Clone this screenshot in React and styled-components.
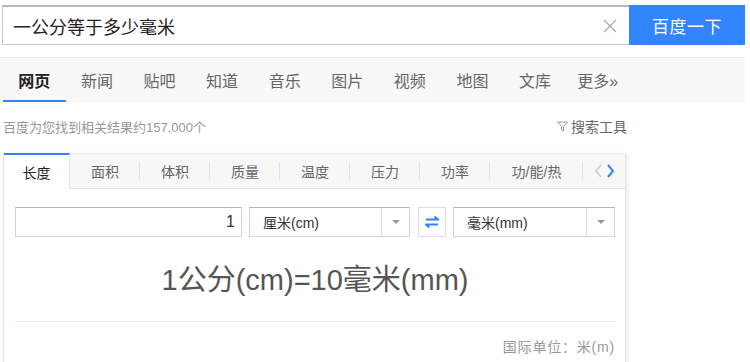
import React from 'react';
import styled, { createGlobalStyle } from 'styled-components';

const GlobalStyle = createGlobalStyle`
  body {
    margin: 0;
    background: #fff;
    font-family: "Liberation Sans", Arial, "Noto Sans CJK SC", sans-serif;
    color: #333;
  }
`;

const Page = styled.div`
  width: 750px;
  height: 362px;
  overflow: hidden;
`;

const SearchBar = styled.div`
  display: flex;
  height: 40px;
  padding: 5px 5px 0 2px;
`;

const SearchBox = styled.div`
  flex: 1;
  display: flex;
  align-items: center;
  box-sizing: border-box;
  border: 1px solid #c4c7ce;
  border-top: 2px solid #b8b8b8;
  border-right: none;
  padding: 0 12px 0 10px;
  font-size: 18px;
  color: #222;
`;

const Query = styled.span`
  flex: 1;
`;

const SearchButton = styled.div`
  width: 116px;
  background: #3385ff;
  color: #fff;
  font-size: 17px;
  display: flex;
  align-items: center;
  justify-content: center;
  letter-spacing: 0.5px;
`;

const Nav = styled.div`
  display: flex;
  margin: 12px 5px 0 0;
  height: 44px;
  padding-left: 3px;
  background: #f8f8f8;
  border-top: 1px solid #ececec;
`;

const NavItem = styled.div`
  width: 62.6px;
  display: flex;
  align-items: center;
  justify-content: center;
  font-size: 16px;
  color: ${(p) => (p.active ? '#222' : '#666')};
  font-weight: ${(p) => (p.active ? 700 : 400)};
  box-sizing: border-box;
  border-bottom: 2px solid ${(p) => (p.active ? '#3385ff' : 'transparent')};
  padding-top: 2px;
`;

const Main = styled.div`
  width: 624px;
  margin-left: 3px;
`;

const CountRow = styled.div`
  height: 51px;
  box-sizing: border-box;
  padding-bottom: 3px;
  display: flex;
  align-items: center;
  justify-content: space-between;
`;

const Count = styled.span`
  font-size: 13px;
  color: #999;
`;

const Tools = styled.span`
  display: flex;
  align-items: center;
  gap: 3px;
  font-size: 14px;
  color: #666;
`;

const Card = styled.div`
  width: 623px;
  box-sizing: border-box;
  border: 1px solid #e6e6e6;
  border-top: none;
  box-shadow: 2px 1px 4px rgba(0, 0, 0, 0.08);
  height: 220px;
`;

const Tabs = styled.div`
  display: flex;
  height: 34px;
  background: #f7f7f7;
  border-bottom: 1px solid #e3e3e3;
  border-top: 1px solid #ececec;
`;

const Tab = styled.div`
  position: relative;
  width: ${(p) => p.w || 70}px;
  display: flex;
  align-items: center;
  justify-content: center;
  font-size: 14px;
  color: ${(p) => (p.active ? '#222' : '#666')};
  box-sizing: border-box;
  ${(p) =>
    p.active
      ? `
    background: #fff;
    border-top: 2px solid #3385ff;
    margin-top: -1px;
    height: 36px;
    border-right: 1px solid #e3e3e3;
  `
      : `
    &::after {
      content: '';
      position: absolute;
      right: 0;
      top: 8px;
      height: 18px;
      width: 1px;
      background: #e3e3e3;
    }
  `}
`;

const TabArrows = styled.div`
  flex: 1;
  display: flex;
  align-items: center;
  justify-content: center;
  gap: 3px;
`;

const Body = styled.div`
  padding: 18px 10px 0 11px;
`;

const InputRow = styled.div`
  display: flex;
  height: 30px;
`;

const NumberInput = styled.div`
  width: 227px;
  box-sizing: border-box;
  border: 1px solid #d3d3d3;
  border-top-color: #b5b5b5;
  display: flex;
  align-items: center;
  justify-content: flex-end;
  padding-right: 6px;
  font-size: 16px;
  color: #333;
`;

const Select = styled.div`
  width: ${(p) => p.w}px;
  margin-left: ${(p) => p.gap}px;
  box-sizing: border-box;
  border: 1px solid #d3d3d3;
  border-top-color: #b5b5b5;
  display: flex;
`;

const SelectText = styled.div`
  flex: 1;
  display: flex;
  align-items: center;
  padding-left: 13px;
  font-size: 14px;
  color: #333;
`;

const SelectArrow = styled.div`
  width: 27px;
  border-left: 1px solid #e0e0e0;
  display: flex;
  align-items: center;
  justify-content: center;
  &::before {
    content: '';
    border-left: 4px solid transparent;
    border-right: 4px solid transparent;
    border-top: 4px solid #999;
  }
`;

const SwapButton = styled.div`
  width: 28px;
  margin-left: 8px;
  box-sizing: border-box;
  border: 1px solid #e0e0e0;
  display: flex;
  align-items: center;
  justify-content: center;
`;

const Result = styled.div`
  height: 85px;
  display: flex;
  align-items: center;
  justify-content: center;
  font-size: 29px;
  color: #555;
  border-bottom: 1px solid #ececec;
  padding-bottom: 4px;
  box-sizing: border-box;
`;

const Footer = styled.div`
  text-align: right;
  font-size: 14px;
  letter-spacing: 0.8px;
  color: #999;
  padding-top: 14px;
`;

export default function App() {
  const navs = ['网页', '新闻', '贴吧', '知道', '音乐', '图片', '视频', '地图', '文库', '更多»'];
  const tabs = ['面积', '体积', '质量', '温度', '压力', '功率'];

  return (
    <Page>
      <GlobalStyle />
      <SearchBar>
        <SearchBox>
          <Query>一公分等于多少毫米</Query>
          <svg width="14" height="14" viewBox="0 0 14 14">
            <path d="M1 1 L13 13 M13 1 L1 13" stroke="#aaa" strokeWidth="1.3" fill="none" />
          </svg>
        </SearchBox>
        <SearchButton>百度一下</SearchButton>
      </SearchBar>

      <Nav>
        {navs.map((n, i) => (
          <NavItem key={n} active={i === 0}>
            {n}
          </NavItem>
        ))}
      </Nav>

      <Main>
        <CountRow>
          <Count>百度为您找到相关结果约157,000个</Count>
          <Tools>
            <svg width="11" height="11" viewBox="0 0 11 11">
              <path d="M0.5 1 H10.5 L6.5 5.5 V10 L4.5 8.8 V5.5 Z" stroke="#999" strokeWidth="1" fill="none" />
            </svg>
            搜索工具
          </Tools>
        </CountRow>

        <Card>
          <Tabs>
            <Tab active w={66}>长度</Tab>
            {tabs.map((t) => (
              <Tab key={t}>{t}</Tab>
            ))}
            <Tab w={93}>功/能/热</Tab>
            <TabArrows>
              <svg width="9" height="14" viewBox="0 0 9 14">
                <path d="M7 1 L2 7 L7 13" stroke="#ccc" strokeWidth="1.6" fill="none" />
              </svg>
              <svg width="9" height="14" viewBox="0 0 9 14">
                <path d="M2 1 L7 7 L2 13" stroke="#3385ff" strokeWidth="2" fill="none" />
              </svg>
            </TabArrows>
          </Tabs>

          <Body>
            <InputRow>
              <NumberInput>1</NumberInput>
              <Select w={161} gap={7}>
                <SelectText>厘米(cm)</SelectText>
                <SelectArrow />
              </Select>
              <SwapButton>
                <svg width="14" height="14" viewBox="0 0 14 14">
                  <path d="M1 4.5 H13 L9.5 1.5" stroke="#3385ff" strokeWidth="2" fill="none" />
                  <path d="M13 9.5 H1 L4.5 12.5" stroke="#3385ff" strokeWidth="2" fill="none" />
                </svg>
              </SwapButton>
              <Select w={162} gap={7}>
                <SelectText>毫米(mm)</SelectText>
                <SelectArrow />
              </Select>
            </InputRow>
            <Result>1公分(cm)=10毫米(mm)</Result>
            <Footer>国际单位：米(m)</Footer>
          </Body>
        </Card>
      </Main>
    </Page>
  );
}
